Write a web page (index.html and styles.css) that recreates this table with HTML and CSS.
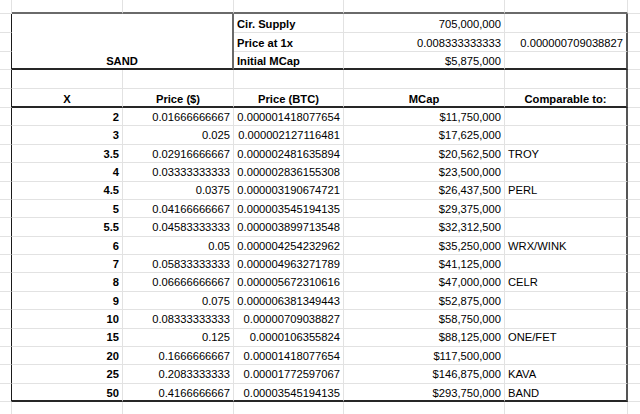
FILE: index.html
```html
<!DOCTYPE html>
<html>
<head>
<meta charset="utf-8">
<link rel="stylesheet" href="styles.css">
</head>
<body>
<div class="sheet">
<table class="grid">
  <colgroup>
    <col class="c0"><col class="ca"><col class="cb"><col class="cc"><col class="cd"><col class="ce"><col class="cf">
  </colgroup>
  <tr class="r-top">
    <td class="gutter"></td><td class="tb"></td><td class="tb"></td><td class="tb"></td><td class="tb"></td><td class="tb"></td><td></td>
  </tr>
  <tr class="r-h">
    <td class="gutter lb"></td>
    <td class="title" colspan="2" rowspan="3">SAND</td>
    <td class="label">Cir. Supply</td>
    <td class="num">705,000,000</td>
    <td class="rb"></td>
    <td></td>
  </tr>
  <tr class="r-h">
    <td class="gutter lb"></td>
    <td class="label">Price at 1x</td>
    <td class="num">0.008333333333</td>
    <td class="num rb">0.000000709038827</td>
    <td></td>
  </tr>
  <tr class="r-h3">
    <td class="gutter lb"></td>
    <td class="label bb">Initial MCap</td>
    <td class="num bb">$5,875,000</td>
    <td class="rb bb"></td>
    <td></td>
  </tr>
  <tr class="r-h">
    <td class="gutter lb"></td><td></td><td></td><td></td><td></td><td class="rb"></td><td></td>
  </tr>
  <tr class="r-h">
    <td class="gutter lb"></td>
    <td class="head bb">X</td>
    <td class="head bb">Price ($)</td>
    <td class="head bb">Price (BTC)</td>
    <td class="head bb">MCap</td>
    <td class="head bb rb">Comparable to:</td>
    <td></td>
  </tr>
  <tr class="r-d"><td class="gutter lb"></td><td class="num x">2</td><td class="num">0.01666666667</td><td class="num">0.000001418077654</td><td class="num">$11,750,000</td><td class="rb"></td><td></td></tr>
  <tr class="r-d"><td class="gutter lb"></td><td class="num x">3</td><td class="num">0.025</td><td class="num">0.000002127116481</td><td class="num">$17,625,000</td><td class="rb"></td><td></td></tr>
  <tr class="r-d"><td class="gutter lb"></td><td class="num x">3.5</td><td class="num">0.02916666667</td><td class="num">0.000002481635894</td><td class="num">$20,562,500</td><td class="rb">TROY</td><td></td></tr>
  <tr class="r-d"><td class="gutter lb"></td><td class="num x">4</td><td class="num">0.03333333333</td><td class="num">0.000002836155308</td><td class="num">$23,500,000</td><td class="rb"></td><td></td></tr>
  <tr class="r-d"><td class="gutter lb"></td><td class="num x">4.5</td><td class="num">0.0375</td><td class="num">0.000003190674721</td><td class="num">$26,437,500</td><td class="rb">PERL</td><td></td></tr>
  <tr class="r-d"><td class="gutter lb"></td><td class="num x">5</td><td class="num">0.04166666667</td><td class="num">0.000003545194135</td><td class="num">$29,375,000</td><td class="rb"></td><td></td></tr>
  <tr class="r-d"><td class="gutter lb"></td><td class="num x">5.5</td><td class="num">0.04583333333</td><td class="num">0.000003899713548</td><td class="num">$32,312,500</td><td class="rb"></td><td></td></tr>
  <tr class="r-d"><td class="gutter lb"></td><td class="num x">6</td><td class="num">0.05</td><td class="num">0.000004254232962</td><td class="num">$35,250,000</td><td class="rb">WRX/WINK</td><td></td></tr>
  <tr class="r-d"><td class="gutter lb"></td><td class="num x">7</td><td class="num">0.05833333333</td><td class="num">0.000004963271789</td><td class="num">$41,125,000</td><td class="rb"></td><td></td></tr>
  <tr class="r-d"><td class="gutter lb"></td><td class="num x">8</td><td class="num">0.06666666667</td><td class="num">0.000005672310616</td><td class="num">$47,000,000</td><td class="rb">CELR</td><td></td></tr>
  <tr class="r-d"><td class="gutter lb"></td><td class="num x">9</td><td class="num">0.075</td><td class="num">0.000006381349443</td><td class="num">$52,875,000</td><td class="rb"></td><td></td></tr>
  <tr class="r-d"><td class="gutter lb"></td><td class="num x">10</td><td class="num">0.08333333333</td><td class="num">0.00000709038827</td><td class="num">$58,750,000</td><td class="rb"></td><td></td></tr>
  <tr class="r-d"><td class="gutter lb"></td><td class="num x">15</td><td class="num">0.125</td><td class="num">0.0000106355824</td><td class="num">$88,125,000</td><td class="rb">ONE/FET</td><td></td></tr>
  <tr class="r-d"><td class="gutter lb"></td><td class="num x">20</td><td class="num">0.1666666667</td><td class="num">0.00001418077654</td><td class="num">$117,500,000</td><td class="rb"></td><td></td></tr>
  <tr class="r-d"><td class="gutter lb"></td><td class="num x">25</td><td class="num">0.2083333333</td><td class="num">0.00001772597067</td><td class="num">$146,875,000</td><td class="rb">KAVA</td><td></td></tr>
  <tr class="r-d last"><td class="gutter lb"></td><td class="num x bb">50</td><td class="num bb">0.4166666667</td><td class="num bb">0.00003545194135</td><td class="num bb">$293,750,000</td><td class="rb bb">BAND</td><td></td></tr>
  <tr class="r-after">
    <td class="gutter"></td><td></td><td></td><td></td><td></td><td></td><td></td>
  </tr>
</table>
</div>
</body>
</html>
```

FILE: styles.css
```css
html, body {
  margin: 0;
  padding: 0;
  background: #ffffff;
}

.sheet {
  width: 640px;
  height: 414px;
  overflow: hidden;
}

.grid {
  table-layout: fixed;
  border-collapse: separate;
  border-spacing: 0;
  width: 660px;
  font-family: "Liberation Sans", Arial, sans-serif;
  font-size: 11.2px;
  line-height: 13px;
  color: #000;
}

.c0 { width: 12px; }
.ca { width: 111px; }
.cb { width: 111px; }
.cc { width: 110px; }
.cd { width: 161px; }
.ce { width: 123px; }
.cf { width: 32px; }

.grid td {
  box-sizing: border-box;
  border-right: 1px solid #e2e2e2;
  border-bottom: 1px solid #e2e2e2;
  padding: 0 3px 1.5px 3px;
  vertical-align: bottom;
  white-space: nowrap;
  overflow: hidden;
}

.r-top { height: 14px; }
.r-h { height: 19px; }
.r-h3 { height: 18px; }
.r-d { height: 18.375px; }
.r-after { height: 20px; }

.grid td.tb {
  border-bottom: 2px solid #6a6a6a;
}

.grid td.lb {
  border-right: 1px solid #1a1a1a;
}

.grid td.rb {
  border-right: 2px solid #555555;
}

.grid td.bb {
  border-bottom: 2px solid #262626;
  padding-bottom: 0.5px;
}

.grid td.title {
  text-align: center;
  font-weight: bold;
  border-right: 2px solid #6a6a6a;
  border-bottom: 2px solid #262626;
  padding-bottom: 0.5px;
}

.label {
  font-weight: bold;
  text-align: left;
}

.num {
  text-align: right;
}

.x {
  font-weight: bold;
}

.head {
  font-weight: bold;
  text-align: center;
}
```
